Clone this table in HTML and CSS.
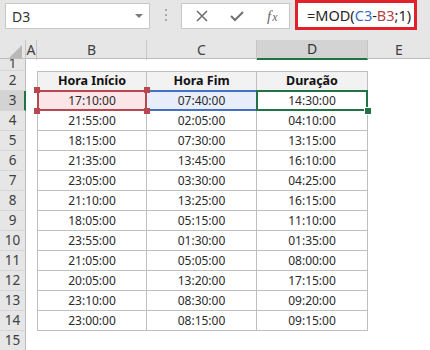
FILE: index.html
```html
<!DOCTYPE html>
<html lang="pt">
<head>
<meta charset="utf-8">
<title>MOD</title>
<link rel="stylesheet" href="styles.css">
</head>
<body>
<div class="app">
  <div class="formula-bar">
    <div class="name-box">
      <span class="name">D3</span>
      <span class="dropdown"></span>
    </div>
    <div class="grip"><i></i><i></i><i></i></div>
    <div class="fx-box">
      <svg class="ico" width="14" height="14" viewBox="0 0 14 14"><path d="M2 2 L12 12 M12 2 L2 12" stroke="#707070" stroke-width="1.6" fill="none"/></svg>
      <svg class="ico" width="16" height="14" viewBox="0 0 16 14"><path d="M2 7 L6 11 L14 3" stroke="#707070" stroke-width="2" fill="none"/></svg>
      <span class="fx"><span class="f">f</span><span class="x">x</span></span>
    </div>
    <div class="formula"><span>=MOD(</span><span class="ref-c">C3</span><span>-</span><span class="ref-b">B3</span><span>;1)</span></div>
  </div>

  <div class="sheet">
    <div class="row col-heads">
      <div class="corner"><span class="tri"></span></div>
      <div class="ch">A</div>
      <div class="ch">B</div>
      <div class="ch">C</div>
      <div class="ch active">D</div>
      <div class="ch last">E</div>
    </div>
    <div class="row short">
      <div class="rh">1</div><div></div><div></div><div></div><div></div><div></div>
    </div>
    <div class="row">
      <div class="rh">2</div><div></div>
      <div class="c head first">Hora Início</div>
      <div class="c head">Hora Fim</div>
      <div class="c head">Duração</div><div></div>
    </div>
    <div class="row">
      <div class="rh active">3</div><div></div>
      <div class="c first sel-red">17:10:00<span class="hd tl"></span><span class="hd tr"></span><span class="hd bl"></span><span class="hd br"></span></div>
      <div class="c sel-blue">07:40:00</div>
      <div class="c sel-green">14:30:00<span class="hd gr"></span></div><div></div>
    </div>
    <div class="row"><div class="rh">4</div><div></div><div class="c first">21:55:00</div><div class="c">02:05:00</div><div class="c">04:10:00</div><div></div></div>
    <div class="row"><div class="rh">5</div><div></div><div class="c first">18:15:00</div><div class="c">07:30:00</div><div class="c">13:15:00</div><div></div></div>
    <div class="row"><div class="rh">6</div><div></div><div class="c first">21:35:00</div><div class="c">13:45:00</div><div class="c">16:10:00</div><div></div></div>
    <div class="row"><div class="rh">7</div><div></div><div class="c first">23:05:00</div><div class="c">03:30:00</div><div class="c">04:25:00</div><div></div></div>
    <div class="row"><div class="rh">8</div><div></div><div class="c first">21:10:00</div><div class="c">13:25:00</div><div class="c">16:15:00</div><div></div></div>
    <div class="row"><div class="rh">9</div><div></div><div class="c first">18:05:00</div><div class="c">05:15:00</div><div class="c">11:10:00</div><div></div></div>
    <div class="row"><div class="rh">10</div><div></div><div class="c first">23:55:00</div><div class="c">01:30:00</div><div class="c">01:35:00</div><div></div></div>
    <div class="row"><div class="rh">11</div><div></div><div class="c first">21:05:00</div><div class="c">05:05:00</div><div class="c">08:00:00</div><div></div></div>
    <div class="row"><div class="rh">12</div><div></div><div class="c first">20:05:00</div><div class="c">13:20:00</div><div class="c">17:15:00</div><div></div></div>
    <div class="row"><div class="rh">13</div><div></div><div class="c first">23:10:00</div><div class="c">08:30:00</div><div class="c">09:20:00</div><div></div></div>
    <div class="row"><div class="rh">14</div><div></div><div class="c first">23:00:00</div><div class="c">08:15:00</div><div class="c">09:15:00</div><div></div></div>
    <div class="row"><div class="rh">15</div><div></div><div></div><div></div><div></div><div></div></div>
  </div>
</div>
</body>
</html>
```

FILE: styles.css
```css
* { box-sizing: border-box; }

html, body {
  margin: 0;
  padding: 0;
  background: #ffffff;
}

.app {
  width: 430px;
  height: 350px;
  overflow: hidden;
  font-family: "Noto Sans", "Open Sans", sans-serif;
  color: #262626;
}

/* ---- formula bar ---- */
.formula-bar {
  height: 40px;
  background: #e6e6e6;
  display: flex;
  align-items: flex-start;
}

.name-box {
  margin: 3px 0 0 5px;
  width: 145px;
  height: 26px;
  background: #fff;
  border: 1px solid #c8c8c8;
  display: flex;
  align-items: center;
  justify-content: space-between;
  padding: 0 6px 0 6px;
}

.name {
  font-size: 14px;
  color: #333;
}

.dropdown {
  width: 0;
  height: 0;
  border-left: 4px solid transparent;
  border-right: 4px solid transparent;
  border-top: 4px solid #7a7a7a;
}

.grip {
  width: 31px;
  height: 30px;
  display: flex;
  flex-direction: column;
  align-items: center;
  justify-content: center;
  gap: 3px;
}

.grip i {
  display: block;
  width: 2px;
  height: 2px;
  background: #a8a8a8;
}

.fx-box {
  margin-top: 3px;
  width: 109px;
  height: 26px;
  background: #fff;
  border: 1px solid #c8c8c8;
  display: flex;
  align-items: center;
  padding-left: 13px;
  gap: 20px;
}

.fx {
  font-family: "Liberation Serif", serif;
  font-style: italic;
  color: #6a6a6a;
  font-size: 15px;
  margin-left: 2px;
}

.fx .x {
  font-size: 12px;
  margin-left: 1px;
}

.formula {
  margin-left: 5px;
  width: 122px;
  height: 30px;
  background: #fff;
  border: 3px solid #e0202a;
  display: flex;
  align-items: center;
  padding-left: 9px;
  font-size: 14.5px;
  color: #262626;
  white-space: nowrap;
}

.ref-c { color: #3a6cc4; }
.ref-b { color: #b2454a; }

/* ---- grid ---- */
.row {
  display: grid;
  grid-template-columns: 26px 11px 110px 110px 111px 1fr;
  height: 20px;
}

.row.short { height: 12px; }

.col-heads {
  height: 19px;
  background: #e6e6e6;
  border-bottom: 1px solid #bcbcbc;
}

.corner {
  position: relative;
  border-right: 1px solid #c6c6c6;
}

.tri {
  position: absolute;
  right: 3px;
  bottom: 2px;
  width: 0;
  height: 0;
  border-left: 13px solid transparent;
  border-bottom: 13px solid #b8b8b8;
}

.ch {
  font-size: 14px;
  color: #404040;
  text-align: center;
  line-height: 19px;
  border-right: 1px solid #c6c6c6;
}

.ch.last { border-right: none; }

.ch.active {
  background: #d3d3d3;
  border-bottom: 2px solid #217346;
  color: #333;
  line-height: 18px;
}

.rh {
  background: #e6e6e6;
  border-right: 1px solid #bcbcbc;
  border-bottom: 1px solid #d6d6d6;
  font-size: 13.5px;
  color: #404040;
  text-align: center;
  line-height: 19px;
}

.short .rh { line-height: 8px; overflow: hidden; }

.rh.active {
  background: #d3d3d3;
  border-right: 2px solid #217346;
  padding-left: 1px;
}

.c {
  position: relative;
  font-size: 12px;
  text-align: center;
  line-height: 19px;
  color: #2b2b2b;
  border-right: 1px solid #bfbfbf;
  border-bottom: 1px solid #bfbfbf;
}

.c.first { border-left: 1px solid #bfbfbf; }

.c.head {
  font-weight: bold;
  font-size: 12.5px;
  color: #111;
  background: #f2f2f2;
  border-top: 1px solid #bfbfbf;
  line-height: 18px;
}

/* range reference highlights */
.sel-red { background: #fbe5e7; }
.sel-red::after {
  content: "";
  position: absolute;
  left: -1px; top: -1px; right: -1px; bottom: -1px;
  border: 2px solid #b84850;
}

.sel-blue { background: #e7eef9; }
.sel-blue::after {
  content: "";
  position: absolute;
  left: 0; top: -1px; right: -1px; bottom: -1px;
  border-top: 2px solid #4470c4;
  border-bottom: 2px solid #4470c4;
}

.sel-green::after {
  content: "";
  position: absolute;
  left: -1px; top: -1px; right: -1px; bottom: -1px;
  border: 2px solid #217346;
}

.hd {
  position: absolute;
  width: 6px;
  height: 6px;
  background: #b84850;
  z-index: 2;
}

.hd.tl { left: -4px; top: -4px; }
.hd.tr { right: -4px; top: -4px; }
.hd.bl { left: -4px; bottom: -4px; }
.hd.br { right: -4px; bottom: -4px; }

.hd.gr {
  background: #217346;
  right: -4px;
  bottom: -4px;
  width: 6px;
  height: 6px;
  outline: 1px solid #fff;
}
```
